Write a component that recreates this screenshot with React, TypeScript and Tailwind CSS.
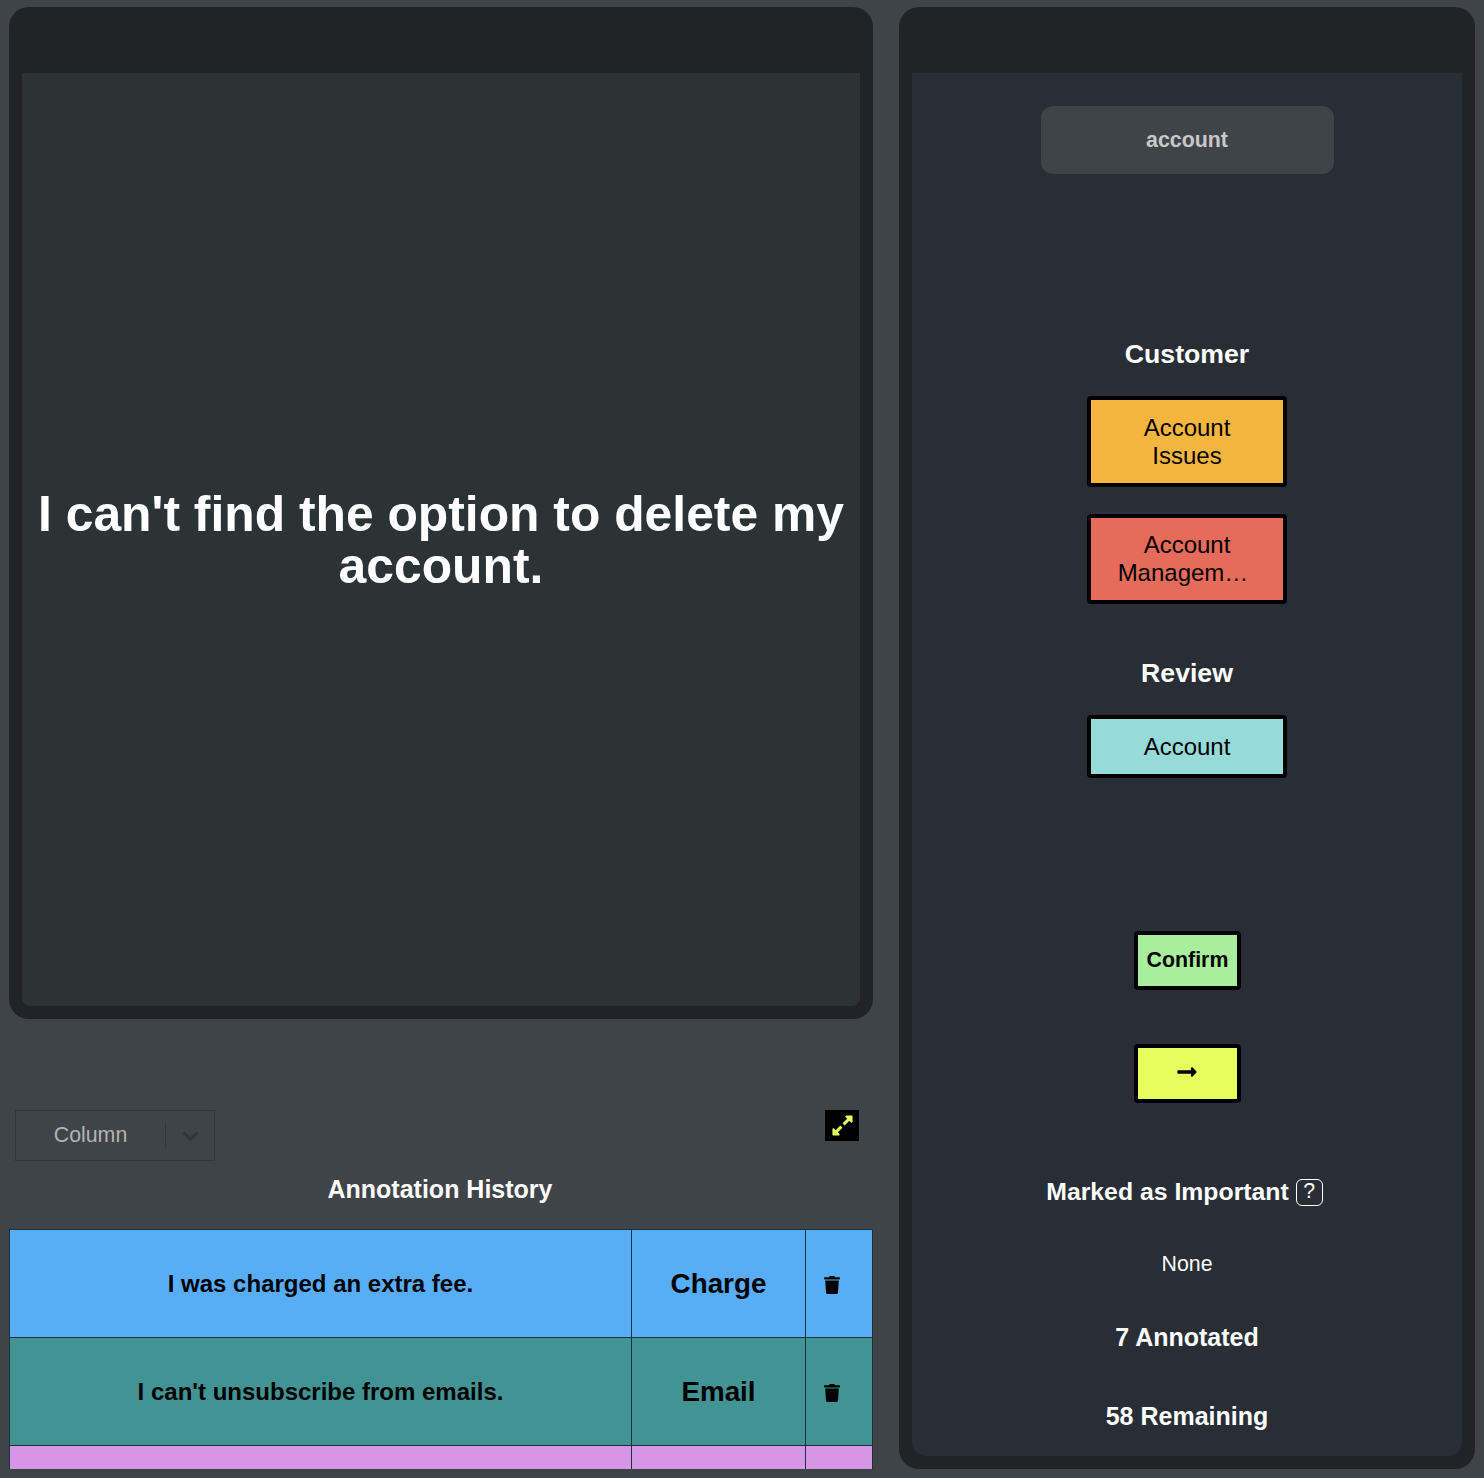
import { FaExpandAlt, FaLongArrowAltRight, FaTrash } from "react-icons/fa"

const rows = [
    { text: "I was charged an extra fee.", label: "Charge", color: "bg-[#57aef7]" },
    { text: "I can't unsubscribe from emails.", label: "Email", color: "bg-[#429393]" },
    { text: "", label: "", color: "bg-[#d795e8]" },
]

function Heading({ children, className = "" }: { children: React.ReactNode; className?: string }) {
    return <div className={`leading-[32px] font-bold text-white text-center ${className}`}>{children}</div>
}

export default function App() {
    return (
        <div className="h-[1478px] w-[1484px] overflow-hidden bg-[#3f4448] flex font-['Liberation_Sans',Arial,sans-serif]">
            {/* left column */}
            <div className="ml-[9px] mt-[7px] w-[864px] flex flex-col">
                <div className="h-[1012px] rounded-[20px] bg-[#212327] px-[13px] pt-[66px] pb-[13px]">
                    <div className="h-full rounded-b-[8px] bg-[#2c3335] flex items-center justify-center px-2 text-center text-[49.8px] leading-[52px] font-bold text-white">
                        I can't find the option to delete my account.
                    </div>
                </div>

                <div className="mt-[91px] h-[51px] flex justify-between pl-[6px] pr-[14px]">
                    <div className="w-[200px] h-[51px] border border-[#333639] flex items-center">
                        <span className="flex-1 text-center text-[21.33px] text-[#b3b3b3]">Column</span>
                        <span className="w-px h-[27px] bg-[#333639]" />
                        <span className="w-[48px] flex justify-center pt-[2px]">
                            <svg width="17" height="11" viewBox="0 0 17 11" fill="none" stroke="#333639" strokeWidth="3">
                                <path d="M1.5 1.5 L8.5 8.5 L15.5 1.5" />
                            </svg>
                        </span>
                    </div>
                    <button className="w-[34px] h-[31px] bg-black flex items-center justify-center pb-[1px] text-[#e6ff5e]">
                        <FaExpandAlt size={23} />
                    </button>
                </div>

                <Heading className="mt-[12px] pr-[2px] text-[25px]">Annotation History</Heading>

                <div className="mt-[24px] h-[240px] overflow-hidden border-t border-l border-r border-[#1b2f3f]">
                    {rows.map((row, i) => (
                        <div key={i} className={`flex h-[108px] border-b border-[#1b2f3f] text-black ${row.color}`}>
                            <div className="w-[622px] flex items-center justify-center font-bold text-[24px] border-r border-[#1b2f3f]">
                                {row.text}
                            </div>
                            <div className="w-[174px] flex items-center justify-center font-bold text-[27.8px] border-r border-[#1b2f3f]">
                                {row.label}
                            </div>
                            <div className="flex-1 flex items-center justify-center pr-[14px] pt-[2px]">
                                {row.text && <FaTrash size={18} />}
                            </div>
                        </div>
                    ))}
                </div>
            </div>

            {/* right column */}
            <div className="ml-[26px] mt-[7px] w-[576px] h-[1462px] rounded-[20px] bg-[#212327] px-[13px] pt-[66px] pb-[13px]">
                <div className="h-full rounded-b-[14px] bg-[#292e36] flex flex-col items-center">
                    <div className="mt-[33px] w-[293px] h-[68px] rounded-[12px] bg-[#3f4448] flex items-center justify-center pt-[1px] text-[21.33px] font-bold text-[#c8c8c8]">
                        account
                    </div>

                    <Heading className="mt-[164px] text-[26.67px]">Customer</Heading>
                    <button className="mt-[26px] w-[200px] h-[91px] rounded-[4px] border-[4px] border-black bg-[#f4b63f] px-[24px] text-[24px] leading-[28px] text-black">
                        Account Issues
                    </button>
                    <button className="mt-[27px] w-[200px] h-[90px] rounded-[4px] border-[4px] border-black bg-[#e56b5a] px-[24px] text-[24px] leading-[28px] text-black">
                        Account
                        <br />
                        <span className="-ml-[8px]">Managem…</span>
                    </button>

                    <Heading className="mt-[53px] text-[26.67px]">Review</Heading>
                    <button className="mt-[26px] w-[200px] h-[63px] rounded-[4px] border-[4px] border-black bg-[#96dbd9] text-[24px] text-black">
                        Account
                    </button>

                    <button className="mt-[153px] w-[107px] h-[59px] rounded-[4px] border-[4px] border-black bg-[#a8ee9c] pl-[1px] text-[21.33px] font-bold text-black">
                        Confirm
                    </button>
                    <button className="mt-[54px] w-[107px] h-[59px] rounded-[4px] border-[4px] border-black bg-[#e6ff5e] flex items-center justify-center pb-[3px] text-black">
                        <FaLongArrowAltRight size={22} />
                    </button>

                    <div className="mt-[73px] mr-[5px] h-[32px] flex items-center gap-[7px] text-[24.8px] font-bold text-white">
                        Marked as Important
                        <span className="w-[27px] h-[27px] rounded-[6px] border border-white flex items-center justify-center text-[21.33px] font-normal">?</span>
                    </div>
                    <div className="mt-[40px] h-[32px] leading-[32px] text-[21.33px] text-white">None</div>
                    <Heading className="mt-[41px] text-[25px]">7 Annotated</Heading>
                    <Heading className="mt-[47px] text-[25px]">58 Remaining</Heading>
                </div>
            </div>
        </div>
    )
}
